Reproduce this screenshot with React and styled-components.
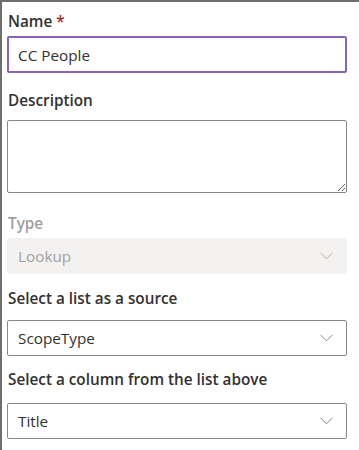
import React from 'react';
import styled, { createGlobalStyle } from 'styled-components';

const GlobalStyle = createGlobalStyle`
	html, body {
		margin: 0;
		padding: 0;
		background: #ffffff;
	}
	body {
		font-family: 'Open Sans', 'Noto Sans', sans-serif;
		color: #323130;
	}
`;

const Chevron = ({ color }) => (
	<svg width="13" height="8" viewBox="0 0 13 8" fill="none">
		<path d="M0.5 0.8 L6.5 6.8 L12.5 0.8" stroke={color} strokeWidth="1" />
	</svg>
);

const Dropdown = ({ value, disabled }) => (
	<Select disabled={disabled}>
		<SelectText disabled={disabled}>{value}</SelectText>
		<Chevron color={disabled ? '#b3b0ad' : '#8a8886'} />
	</Select>
);

export default function App() {
	return (
		<>
			<GlobalStyle />
			<Panel>
				<Label top={8}>
					Name <Required>*</Required>
				</Label>
				<TextInput value="CC People" readOnly />

				<Label top={16}>Description</Label>
				<TextArea />

				<Label top={19} disabled>Type</Label>
				<Dropdown value="Lookup" disabled />

				<Label top={13} bottom={11}>Select a list as a source</Label>
				<Dropdown value="ScopeType" />

				<Label top={12} bottom={13}>Select a column from the list above</Label>
				<Dropdown value="Title" />
			</Panel>
		</>
	);
}

const Panel = styled.div`
	box-sizing: border-box;
	width: 359px;
	height: 450px;
	border-top: 2px solid #6e6e6e;
	border-left: 2px solid #6e6e6e;
	padding: 0 12px 0 5px;
	display: flex;
	flex-direction: column;
	overflow: hidden;
`;

const Label = styled.label`
	display: block;
	font-size: 15.3px;
	line-height: 22px;
	font-weight: 600;
	color: ${(p) => (p.disabled ? '#a19f9d' : '#323130')};
	margin-top: ${(p) => p.top}px;
	margin-bottom: ${(p) => (p.bottom !== undefined ? p.bottom : 4)}px;
	padding-left: 1px;
`;

const Required = styled.span`
	color: #a4262c;
	font-weight: 600;
`;

const TextInput = styled.input`
	box-sizing: border-box;
	width: 340px;
	height: 37px;
	margin: 0;
	border: 2px solid #8764b8;
	border-radius: 2px;
	padding: 0 9px;
	font-family: 'Open Sans', 'Noto Sans', sans-serif;
	font-size: 15.3px;
	color: #323130;
	outline: none;
	background: #ffffff;
`;

const TextArea = styled.textarea`
	box-sizing: border-box;
	display: block;
	width: 340px;
	height: 73px;
	margin: 5px 0 0;
	border: 1px solid #8a8886;
	border-radius: 2px;
	padding: 6px 9px;
	font-family: 'Open Sans', 'Noto Sans', sans-serif;
	font-size: 15.3px;
	resize: vertical;
	outline: none;
`;

const Select = styled.div`
	box-sizing: border-box;
	width: 340px;
	height: 36px;
	display: flex;
	align-items: center;
	justify-content: space-between;
	padding: 0 13px 0 10px;
	border: 1px solid ${(p) => (p.disabled ? '#f3f2f1' : '#8a8886')};
	border-radius: 2px;
	background: ${(p) => (p.disabled ? '#f3f2f1' : '#ffffff')};
`;

const SelectText = styled.span`
	font-size: 15.3px;
	line-height: 20px;
	color: ${(p) => (p.disabled ? '#a19f9d' : '#323130')};
`;
